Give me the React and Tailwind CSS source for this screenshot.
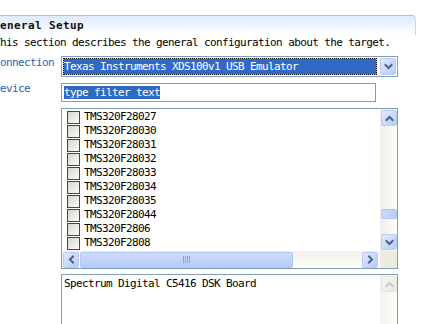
import React from "react";

const Arrow = ({ dir, color = "#4d6185" }) => {
  const pts = {
    up: "1.5,6 4.5,3 7.5,6",
    down: "1.5,3 4.5,6 7.5,3",
    left: "6,1.5 3,4.5 6,7.5",
    right: "3,1.5 6,4.5 3,7.5",
  }[dir];
  return (
    <svg width="9" height="9" viewBox="0 0 9 9">
      <polyline points={pts} fill="none" stroke={color} strokeWidth="2" strokeLinecap="square" />
    </svg>
  );
};

const SBtn = ({ dir, disabled, className = "" }) => (
  <div
    className={
      disabled
        ? "w-[16px] h-[16px] rounded-[2px] border border-[#e6e5dd] bg-linear-to-br from-[#f7f6f2] to-[#e9e8e0] flex items-center justify-center " + className
        : "w-[16px] h-[16px] rounded-[2px] border border-[#b7cbf6] bg-linear-to-br from-[#e1eafe] to-[#b6cbf7] flex items-center justify-center " + className
    }
  >
    <Arrow dir={dir} color={disabled ? "#c9c8c0" : "#4d6185"} />
  </div>
);

const items = [
  "TMS320F28027",
  "TMS320F28030",
  "TMS320F28031",
  "TMS320F28032",
  "TMS320F28033",
  "TMS320F28034",
  "TMS320F28035",
  "TMS320F28044",
  "TMS320F2806",
  "TMS320F2808",
];

export default function App() {
  return (
    <div
      className="w-[430px] h-[324px] overflow-hidden bg-white text-[11px] tracking-[-0.62px] text-black"
      style={{ fontFamily: '"DejaVu Sans Mono", "Liberation Mono", monospace' }}
    >
      <div className="ml-[-6px] w-[422px]">
        {/* Section header */}
        <div className="mt-[15px] h-[20px] border-t border-r border-t-[#a9c2e8] border-r-[#c9d9f2] rounded-tr-[4px] bg-linear-to-b from-[#e0eafb] to-white">
          <div className="leading-[19px] font-bold tracking-[0.38px] text-[#111] ml-[-1px]">General Setup</div>
        </div>
        <div className="h-[14px] pt-[1px] leading-[14px]">This section describes the general configuration about the target.</div>

        {/* Connection */}
        <div className="mt-[7px] flex">
          <div className="w-[67px] pt-[1px] leading-[12px] text-[#2d5fb3]">Connection</div>
          <div className="w-[337px] h-[21px] border border-[#7f9db9] p-[1px] flex">
            <div className="flex-1 bg-[#e3b44a]">
              <div className="h-full border border-dotted border-black bg-[#316ac5] bg-clip-padding text-white leading-[15px] whitespace-nowrap">
                Texas Instruments XDS100v1 USB Emulator
              </div>
            </div>
            <SBtn dir="down" className="ml-[3px] h-[17px]" />
          </div>
        </div>

        {/* Device */}
        <div className="mt-[6px] flex">
          <div className="w-[67px] leading-[11px] text-[#2d5fb3]">Device</div>
          <div className="w-[315px] h-[19px] border border-[#7f9db9] pl-[2px] flex items-center">
            <span className="leading-[13px] bg-[#316ac5] text-white">type filter text</span>
          </div>
        </div>

        {/* List */}
        <div className="mt-[6px] flex">
          <div className="w-[67px]" />
          <div className="w-[337px] h-[161px] border border-[#7f9db9] flex flex-col">
            <div className="h-[142px] flex">
              <div className="flex-1 pl-[5px] overflow-hidden">
                {items.map((t) => (
                  <div key={t} className="h-[14px] flex items-start">
                    <div className="mt-[2px] w-[13px] h-[13px] shrink-0 border border-[#1c5180] bg-linear-to-br from-[#d6d6ce] to-[#fbfbf9]" />
                    <span className="ml-[4px] pt-[1px] leading-[14px] whitespace-nowrap">{t}</span>
                  </div>
                ))}
              </div>
              <div className="w-[17px] pl-[1px] pt-[1px] pb-[1px] flex flex-col bg-linear-to-r from-[#efeee7] to-[#fdfdfa]">
                <SBtn dir="up" />
                <div className="mt-[83px] w-[16px] h-[10px] rounded-[2px] border border-[#b3c7f5] bg-linear-to-r from-[#c9d8fc] to-[#b9cdf9]" />
                <div className="flex-1" />
                <SBtn dir="down" />
              </div>
            </div>
            <div className="h-[17px] flex">
              <div className="flex-1 flex items-center pl-[1px] pr-[2px] bg-linear-to-b from-[#f2f1ea] to-[#fdfdfa]">
                <SBtn dir="left" />
                <div className="ml-[1px] w-[213px] h-[16px] rounded-[2px] border border-[#b3c7f5] bg-linear-to-b from-[#cddbfd] to-[#b6cbf8] flex items-center justify-center">
                  <svg width="8" height="7" viewBox="0 0 8 7">
                    <g stroke="#8ea6e0" strokeWidth="1">
                      <line x1="0.5" y1="0" x2="0.5" y2="7" />
                      <line x1="2.5" y1="0" x2="2.5" y2="7" />
                      <line x1="4.5" y1="0" x2="4.5" y2="7" />
                      <line x1="6.5" y1="0" x2="6.5" y2="7" />
                    </g>
                  </svg>
                </div>
                <div className="flex-1" />
                <SBtn dir="right" />
              </div>
              <div className="w-[17px] bg-[#ecebe2]" />
            </div>
          </div>
        </div>

        {/* Description text area */}
        <div className="mt-[5px] flex">
          <div className="w-[67px]" />
          <div className="w-[337px] h-[70px] border border-[#7f9db9] flex">
            <div className="flex-1 pl-[2px] pt-[2px] leading-[14px] whitespace-nowrap">Spectrum Digital C5416 DSK Board</div>
            <div className="w-[17px] pl-[1px] pt-[1px] bg-linear-to-r from-[#f3f2ec] to-[#fdfdfb]">
              <SBtn dir="up" disabled />
            </div>
          </div>
        </div>
      </div>
    </div>
  );
}
